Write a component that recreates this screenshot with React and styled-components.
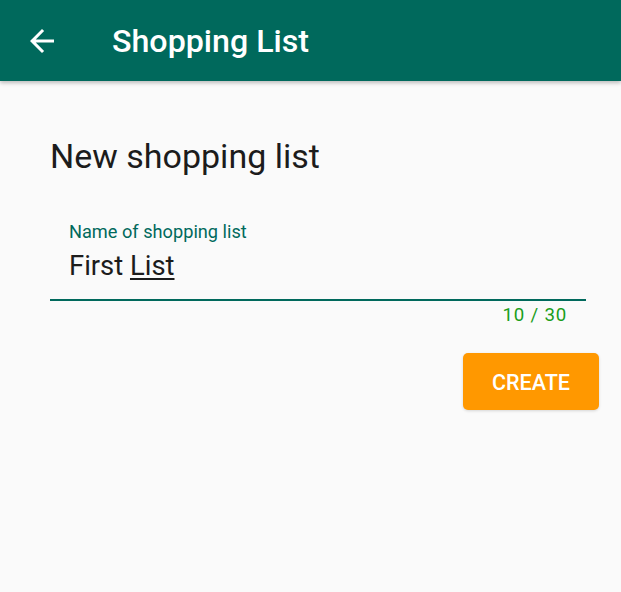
import styled, { createGlobalStyle } from 'styled-components'

const Global = createGlobalStyle`
body {
margin: 0;
background: #fafafa;
font-family: Roboto, 'Liberation Sans', sans-serif;
}
`

const Page = styled.div`
min-height: 592px;
background: #fafafa;
`

const Bar = styled.header`
height: 81px;
background: #00695c;
display: flex;
align-items: center;
padding-left: 24px;
box-shadow: 0 2px 4px rgba(0, 0, 0, 0.25);
`

const Back = styled.button`
border: 0;
background: none;
padding: 0;
width: 36px;
height: 36px;
display: flex;
color: #fff;
`

const Title = styled.h1`
margin: 0 0 0 52px;
font-size: 32.2px;
font-weight: 500;
color: #fff;
line-height: 36px;
`

const Content = styled.main`
padding: 55px 22px 0 50px;
display: flex;
flex-direction: column;
`

const Heading = styled.h2`
margin: 0;
font-size: 34px;
line-height: 40px;
font-weight: 400;
color: #1c1c1c;
`

const Field = styled.div`
margin-top: 45px;
margin-right: 13px;
padding: 0 19px;
border-bottom: 2px solid #00695c;
`

const Label = styled.div`
font-size: 18.2px;
line-height: 22px;
color: #00695c;
`

const Value = styled.div`
font-size: 27.4px;
line-height: 32px;
color: #1c1c1c;
padding: 7px 0 17px;
`

const Marked = styled.span`
text-decoration: underline;
text-decoration-thickness: 1.5px;
text-underline-offset: 3px;
`

const Counter = styled.div`
margin-right: 32px;
text-align: right;
font-size: 18.7px;
line-height: 22px;
color: #1a9e1a;
letter-spacing: 0.8px;
padding-top: 3px;
`

const Actions = styled.div`
display: flex;
justify-content: flex-end;
margin-top: 27px;
`

const Create = styled.button`
width: 136px;
height: 57px;
border: 0;
border-radius: 5px;
background: #ff9800;
color: #fff;
font-family: Roboto, 'Liberation Sans', sans-serif;
font-size: 21.5px;
font-weight: 500;
padding-top: 2px;
box-shadow: 0 1px 3px rgba(0, 0, 0, 0.15);
`

export default function App() {
    return (
        <>
            <Global />
            <Page>
                <Bar>
                    <Back>
                        <svg width="36" height="36" viewBox="0 0 24 24" fill="#fff">
                            <path d="M20 11H7.83l5.59-5.59L12 4l-8 8 8 8 1.41-1.41L7.83 13H20v-2z" />
                        </svg>
                    </Back>
                    <Title>Shopping List</Title>
                </Bar>
                <Content>
                    <Heading>New shopping list</Heading>
                    <Field>
                        <Label>Name of shopping list</Label>
                        <Value>First <Marked>List</Marked></Value>
                    </Field>
                    <Counter>10 / 30</Counter>
                    <Actions>
                        <Create>CREATE</Create>
                    </Actions>
                </Content>
            </Page>
        </>
    )
}
